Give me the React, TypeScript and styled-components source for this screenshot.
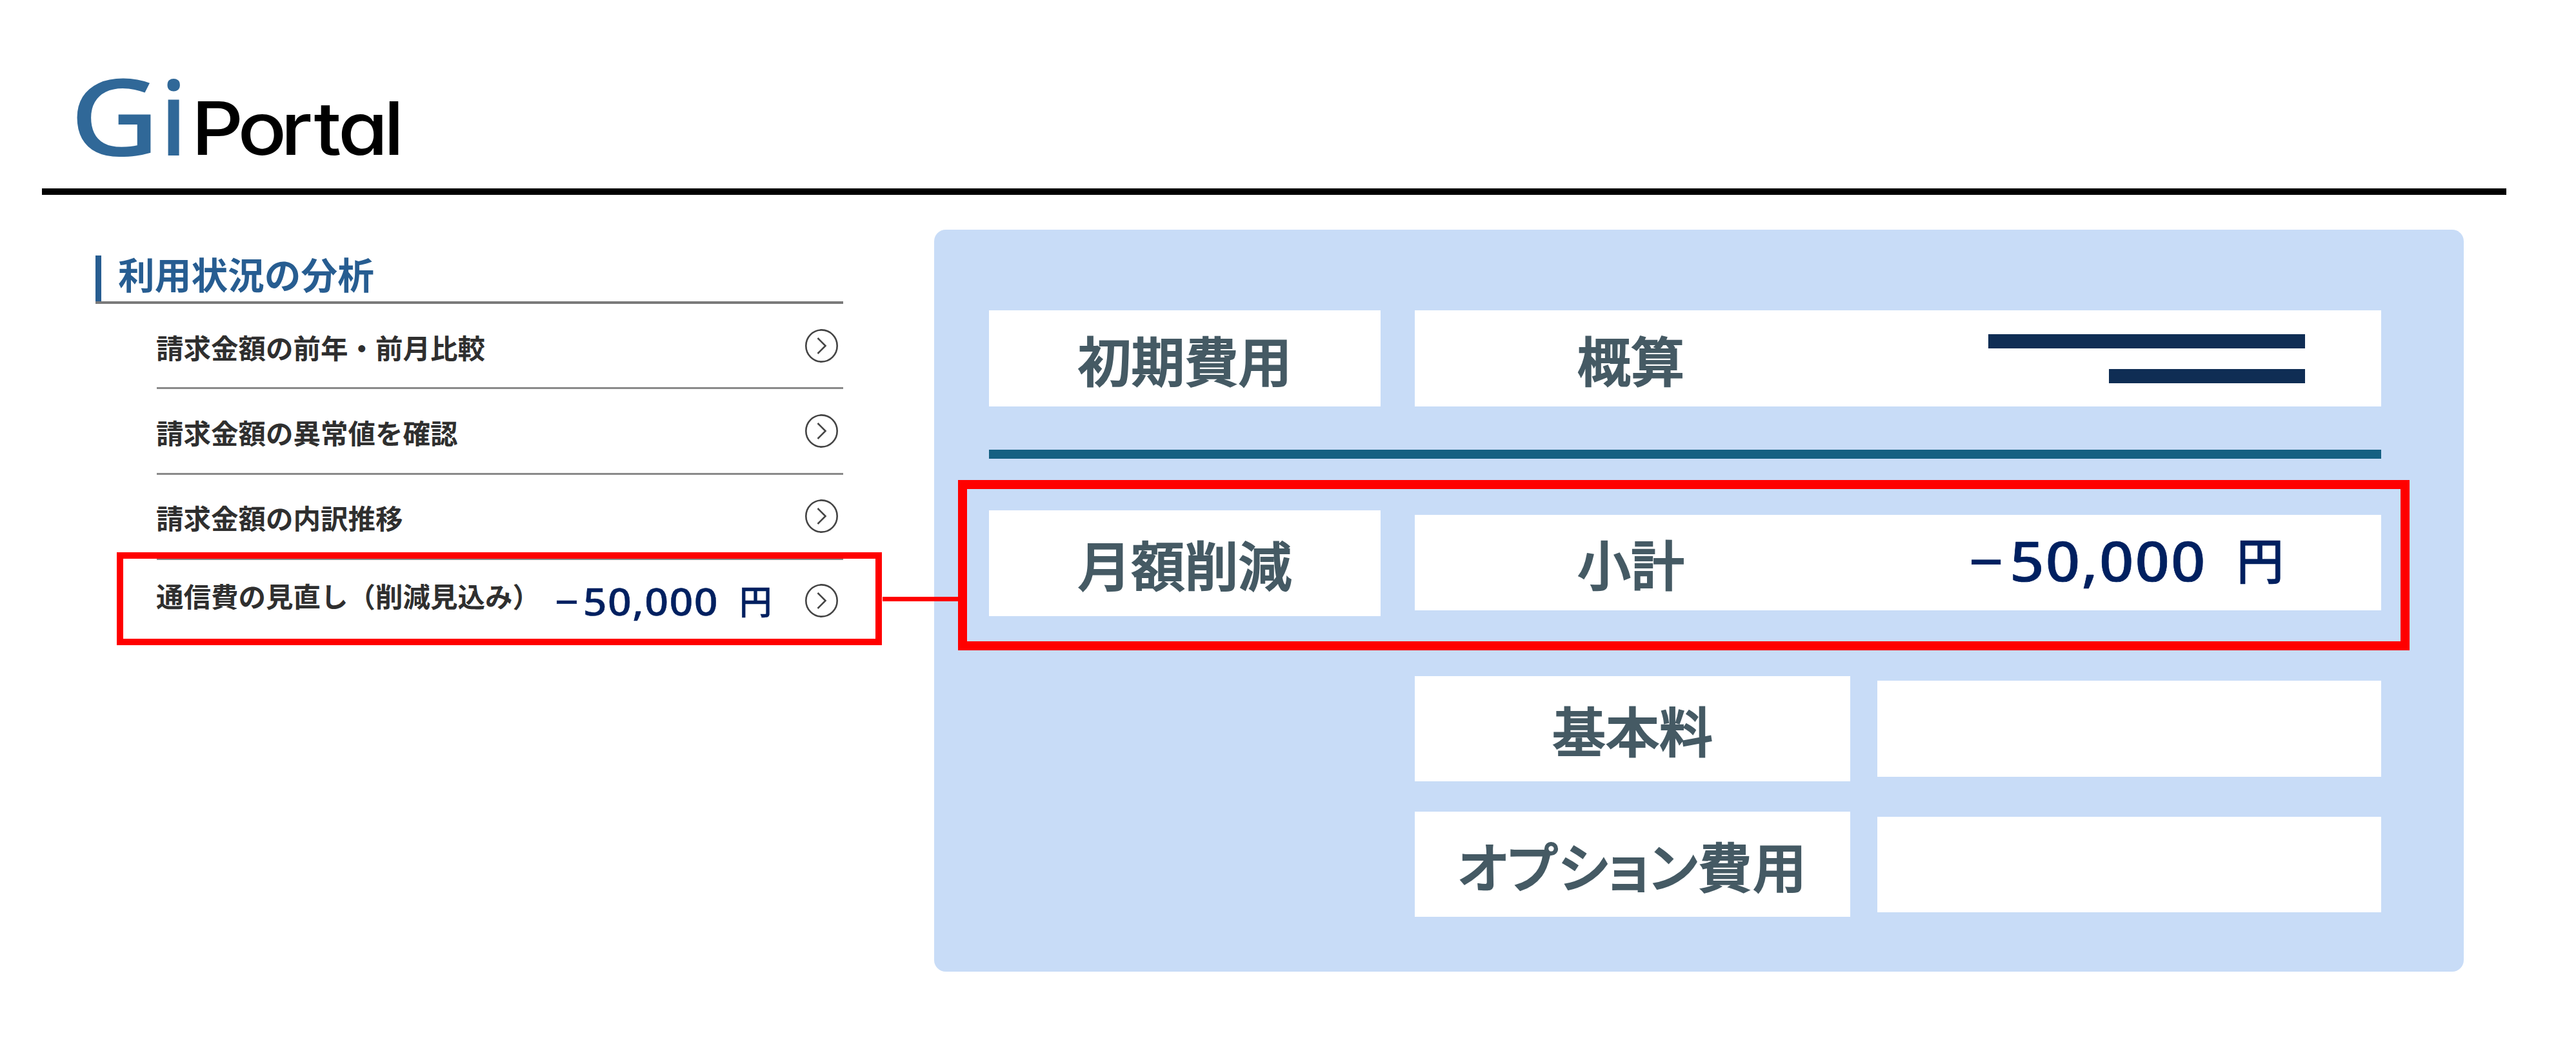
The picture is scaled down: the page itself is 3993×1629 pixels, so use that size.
import type { ReactNode } from 'react';
import styled, { createGlobalStyle, ThemeProvider } from 'styled-components';

const theme = {
  white: '#ffffff',
  black: '#000000',
  brandBlue: '#306898',
  headingBlue: '#275d91',
  ink: '#2f2f2f',
  line: '#7a7a7a',
  panel: '#c8dcf7',
  slate: '#455a64',
  navy: '#002060',
  barNavy: '#0f2d54',
  teal: '#156082',
  red: '#ff0000',

  japanese: '"Noto Sans CJK JP", sans-serif',
  latin: '"Noto Sans", "Noto Sans CJK JP", sans-serif',
};

const GlobalStyle = createGlobalStyle`
  *,
  *::before {
    box-sizing: border-box;
  }

  body {
    margin: 0;
    background-color: #ffffff;
  }
`;

const Page = styled.div`
  position: relative;

  width: 3993px;
  height: 1629px;

  font-family: ${(props) => props.theme.japanese};
  overflow: hidden;
`;

const Header = styled.header`
  height: 302px;
  padding: 100px 0 0 51px;
  border-bottom: 10px solid ${(props) => props.theme.black};
  margin: 0 108px 0 65px;
`;

const LogoSvg = styled.svg`
  display: block;
  overflow: visible;
`;

const BrandText = styled.text`
  fill: ${(props) => props.theme.brandBlue};

  font-family: 'Noto Sans', sans-serif;
  font-weight: 500;
`;

const PortalText = styled.text`
  fill: ${(props) => props.theme.black};

  font-family: Inter, sans-serif;
  font-size: 114px;
  font-weight: 500;
  font-feature-settings: 'cv11';
`;

const Main = styled.main`
  display: flex;
  align-items: flex-start;
  gap: 141px;

  padding: 54px 0 0 148px;
`;

const Analysis = styled.section`
  width: 1159px;
  padding-top: 40px;
`;

const Heading = styled.h1`
  display: flex;
  align-items: flex-start;
  gap: 26px;

  height: 75px;
  border-bottom: 4px solid ${(props) => props.theme.line};
  margin: 0;

  color: ${(props) => props.theme.headingBlue};
  font-size: 56.7px;
  font-weight: 700;
  line-height: 55px;

  &::before {
    content: '';
    width: 9px;
    height: 71px;
    background-color: ${(props) => props.theme.headingBlue};
  }
`;

const MenuList = styled.ul`
  list-style: none;

  padding: 0;
  margin: 0 0 0 95px;
`;

const MenuItem = styled.li<{ $last?: boolean }>`
  display: flex;
  align-items: center;

  height: ${(props) => (props.$last ? 127 : 132.3)}px;
  padding-right: 8px;
  border-bottom: ${(props) => (props.$last ? '0' : '3px')} solid #8a8a8a;
`;

const MenuLabel = styled.span<{ $raise?: number }>`
  color: ${(props) => props.theme.ink};
  font-size: 42.5px;
  font-weight: 700;
  line-height: 48px;
  white-space: nowrap;

  padding-top: 4px;
  padding-bottom: ${(props) => props.$raise ?? 0}px;
  margin-left: -1px;
`;

const ArrowIcon = styled.svg`
  width: 51px;
  height: 52px;
  margin-left: auto;

  fill: none;
  stroke: #444444;
  stroke-width: 2.6;
`;

const Amount = styled.span<{ $size: number }>`
  display: inline-block;

  color: ${(props) => props.theme.navy};
  font-family: ${(props) => props.theme.latin};
  font-size: ${(props) => props.$size}px;
  font-weight: 500;
  letter-spacing: 0.022em;
  line-height: 1;
  white-space: nowrap;
  -webkit-text-stroke: 0.008em ${(props) => props.theme.navy};

  transform: scaleX(1.1);
  transform-origin: left center;
`;

const Sign = styled.span`
  margin-right: 0.08em;
`;

const Yen = styled.span`
  display: inline-block;

  font-family: ${(props) => props.theme.japanese};
  font-size: 0.9em;

  margin-left: 0.55em;

  transform: translateY(-0.04em) scaleX(0.87);
  transform-origin: left center;
`;

const MenuAmount = styled.div`
  padding-bottom: 1px;
  margin-left: 23px;
`;

const PanelAmount = styled.div`
  flex: 0 0 521px;
  padding-bottom: 7px;
`;

const Panel = styled.section`
  width: 2371px;
  height: 1150px;
  padding: 125px 128px 0 85px;
  border-radius: 18px;

  background-color: ${(props) => props.theme.panel};
`;

const Row = styled.div<{ $top?: number; $indent?: number; $gap: number }>`
  display: flex;
  align-items: flex-start;
  gap: ${(props) => props.$gap}px;

  padding-left: ${(props) => props.$indent ?? 0}px;
  margin-top: ${(props) => props.$top ?? 0}px;
`;

const Cell = styled.div<{ $width?: number; $height: number; $top?: number }>`
  display: flex;
  align-items: center;
  justify-content: center;

  flex: ${(props) => (props.$width ? `0 0 ${props.$width}px` : '1')};
  height: ${(props) => props.$height}px;
  margin-top: ${(props) => props.$top ?? 0}px;

  background-color: ${(props) => props.theme.white};
`;

const WideCell = styled(Cell)`
  justify-content: space-between;

  padding: 0 118px 0 252px;
`;

const CellText = styled.span<{ $tight?: boolean }>`
  color: ${(props) => props.theme.slate};
  font-size: 83px;
  font-weight: 500;
  font-feature-settings: ${(props) => (props.$tight ? "'palt'" : 'normal')};
  letter-spacing: ${(props) => (props.$tight ? '1.6px' : '0')};
  line-height: 1;
  white-space: nowrap;
  -webkit-text-stroke: 2px ${(props) => props.theme.slate};

  padding-top: 1px;
`;

const Divider = styled.hr`
  height: 14px;
  border: 0;
  margin: 67px 0 0;

  background-color: ${(props) => props.theme.teal};
`;

const Bars = styled.div`
  display: flex;
  flex-direction: column;
  align-items: flex-end;
  gap: 32px;
`;

const Bar = styled.div<{ $width: number }>`
  width: ${(props) => props.$width}px;
  height: 22px;

  background-color: ${(props) => props.theme.barNavy};
`;

const MenuHighlight = styled.div`
  position: absolute;
  top: 856px;
  left: 181px;

  width: 1186px;
  height: 144px;
  border: 10px solid ${(props) => props.theme.red};
`;

const PanelHighlight = styled.div`
  position: absolute;
  top: 744px;
  left: 1485px;

  width: 2250px;
  height: 264px;
  border: 14px solid ${(props) => props.theme.red};
`;

const Connector = styled.div`
  position: absolute;
  top: 925px;
  left: 1368px;

  width: 118px;
  height: 7px;

  background-color: ${(props) => props.theme.red};
`;

function Logo() {
  return (
    <LogoSvg width='520' height='160' viewBox='0 0 520 160'>
      <BrandText fontSize='166' transform='translate(-8 141) scale(1.16 1)'>
        G
      </BrandText>
      <BrandText x='131.5' y='141' fontSize='160'>
        i
      </BrandText>
      <PortalText
        x='164.4 229.5 290.2 336.9 370.9 435.2'
        y='0'
        transform='translate(0 140) scale(1.1 1)'
      >
        Portal
      </PortalText>
    </LogoSvg>
  );
}

function Arrow() {
  return (
    <ArrowIcon viewBox='0 0 51 52'>
      <ellipse cx='25.5' cy='26' rx='24.2' ry='24.6' />
      <path d='M19.5 14 L31.5 26 L19.5 38' />
    </ArrowIcon>
  );
}

function Price({ size }: { size: number }) {
  return (
    <Amount $size={size}>
      <Sign>−</Sign>50,000<Yen>円</Yen>
    </Amount>
  );
}

function MenuRow({
  children,
  raise,
  last,
  label,
}: {
  children?: ReactNode;
  raise?: number;
  last?: boolean;
  label: string;
}) {
  return (
    <MenuItem $last={last}>
      <MenuLabel $raise={raise}>{label}</MenuLabel>
      {children}
      <Arrow />
    </MenuItem>
  );
}

function App() {
  return (
    <ThemeProvider theme={theme}>
      <GlobalStyle />
      <Page>
        <Header>
          <Logo />
        </Header>
        <Main>
          <Analysis>
            <Heading>利用状況の分析</Heading>
            <MenuList>
              <MenuRow label='請求金額の前年・前月比較' />
              <MenuRow label='請求金額の異常値を確認' />
              <MenuRow label='請求金額の内訳推移' />
              <MenuRow label='通信費の見直し（削減見込み）' raise={21} last>
                <MenuAmount>
                  <Price size={58.6} />
                </MenuAmount>
              </MenuRow>
            </MenuList>
          </Analysis>
          <Panel>
            <Row $gap={53}>
              <Cell $width={607} $height={149}>
                <CellText>初期費用</CellText>
              </Cell>
              <WideCell $height={149}>
                <CellText>概算</CellText>
                <Bars>
                  <Bar $width={491} />
                  <Bar $width={304} />
                </Bars>
              </WideCell>
            </Row>
            <Divider />
            <Row $gap={53} $top={80}>
              <Cell $width={607} $height={164}>
                <CellText>月額削減</CellText>
              </Cell>
              <WideCell $height={148} $top={7}>
                <CellText>小計</CellText>
                <PanelAmount>
                  <Price size={85} />
                </PanelAmount>
              </WideCell>
            </Row>
            <Row $gap={42} $indent={660} $top={93}>
              <Cell $width={675} $height={163}>
                <CellText>基本料</CellText>
              </Cell>
              <Cell $height={149} $top={7} />
            </Row>
            <Row $gap={42} $indent={660} $top={47}>
              <Cell $width={675} $height={163}>
                <CellText $tight>オプション費用</CellText>
              </Cell>
              <Cell $height={148} $top={8} />
            </Row>
          </Panel>
        </Main>
        <MenuHighlight />
        <PanelHighlight />
        <Connector />
      </Page>
    </ThemeProvider>
  );
}

export default App;
